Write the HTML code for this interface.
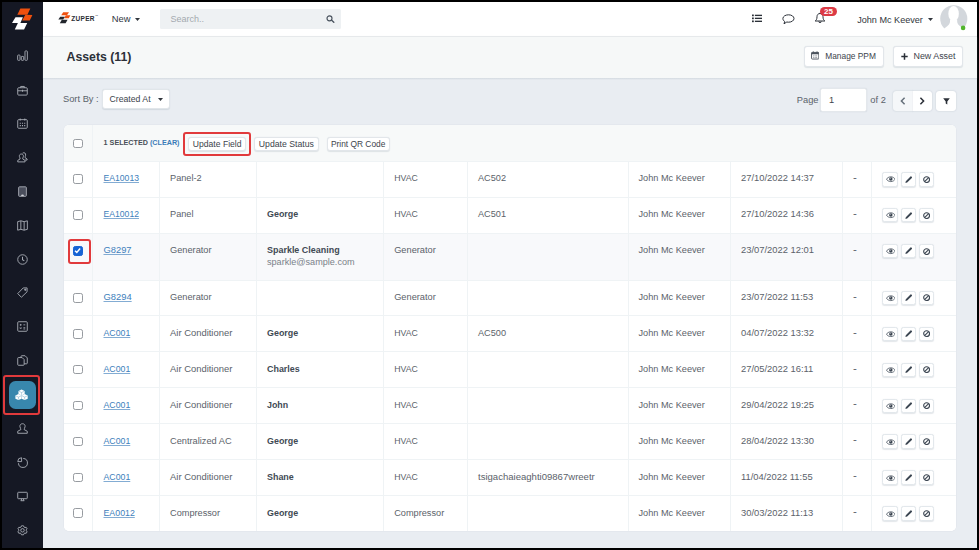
<!DOCTYPE html>
<html>
<head>
<meta charset="utf-8">
<title>Assets</title>
<style>
*{box-sizing:border-box;margin:0;padding:0}
html,body{width:979px;height:550px;overflow:hidden;background:#000}
body{font-family:"Liberation Sans",sans-serif;position:relative;color:#555c64;font-size:9px}
.abs{position:absolute}
#side{position:absolute;left:2px;top:2px;width:40.600px;height:546px;background:#151824}
#nav{position:absolute;left:42.600px;top:2px;width:934.400px;height:34px;background:#fff}
#hdr{position:absolute;left:42.600px;top:36px;width:934.400px;height:41.600px;background:#f6f8f8;border-top:1px solid #e6e9eb;box-shadow:0 1px 1.500px rgba(120,135,150,.38)}
#main{position:absolute;left:42.600px;top:77.600px;width:934.400px;height:470.400px;background:#e9edf2}
.si{position:absolute;left:0;width:40.600px;display:block}
.si svg{display:block;margin:0 auto}
.btn{position:absolute;background:#fff;border:1px solid #e2e6ea;border-radius:3px;white-space:nowrap;color:#3d444c;box-shadow:0 .5px 1px rgba(90,110,130,.16)}
#tbl{position:absolute;left:63.500px;top:125.400px;width:892.500px;height:405.500px;background:#fff;border-radius:5px;overflow:hidden;box-shadow:0 0 0 .5px #dfe4e9}
#thead{position:absolute;left:0;top:0;width:100%;height:36.500px;background:#f7f9f9;border-bottom:1px solid #eff3f5}
.row{position:absolute;left:0;width:100%;border-bottom:1px solid #eff3f5;background:#fff}
.row.sel{background:#f8f9fb}
.vd{position:absolute;top:0;width:1px;height:100%;background:#eff3f5}
.t{position:absolute;top:10.600px;line-height:12px;font-size:9px;white-space:nowrap;color:#5b626a}
.t.lnk{color:#4080bb;text-decoration:underline;text-decoration-thickness:.7px;text-underline-offset:1.200px;text-decoration-color:rgba(64,128,187,.65);font-size:8.700px}
.t.b{font-weight:700;color:#414a54;font-size:8.900px}
.t.em{color:#7a8189;font-size:9.100px}
.t.dt{font-size:9.400px}
.cb{position:absolute;left:9.700px;width:9.600px;height:9.600px;border:1.100px solid #979ba0;border-radius:2.300px;background:#fff}
.cb.on{background:#1663d4;border-color:#1663d4}
.cb.on svg{position:absolute;left:-1px;top:-1px}
.ab{position:absolute;top:10.300px;height:14.400px;display:flex;align-items:center;justify-content:center;border:1px solid #e3e8ec;border-radius:2.500px;background:#fff;box-shadow:0 .5px 1px rgba(120,135,150,.2)}
.ic{position:absolute;display:block}
.red{position:absolute;border:2px solid #e13a3c;border-radius:3px}
</style>
</head>
<body>

<!-- SIDEBAR -->
<div id="side">
  <!-- logo -->
  <svg class="abs" style="left:0;top:0" width="40" height="36" viewBox="0 0 40 36">
    <path d="M18.400 6.600H28.300L25.400 12.800H15.300Z" fill="#ee500e"/>
    <path d="M23.300 12.800L30.400 12.900L27.700 18.400H20.200Z" fill="#ee500e"/>
    <path d="M13.500 15.300H20.900L18.400 20.900H10Z" fill="#fff"/>
    <path d="M15.900 20.900H25.200L22.100 27.400H12.800Z" fill="#fff"/>
  </svg>
  <!-- bar chart -->
  <svg class="abs" style="left:14.800px;top:48.0px" width="11" height="11" viewBox="0 0 12 12" fill="none" stroke="#a9adb6" stroke-width="1">
    <rect x="0.700" y="5.500" width="2.600" height="5.800" rx=".8"/><rect x="4.700" y="7" width="2.600" height="4.300" rx=".8"/><rect x="8.700" y="1" width="2.600" height="10.300" rx=".8"/>
  </svg>
  <!-- briefcase -->
  <svg class="abs" style="left:14.800px;top:82.6px" width="11" height="11" viewBox="0 0 12 12" fill="none" stroke="#a9adb6" stroke-width="1">
    <rect x="0.800" y="3" width="10.400" height="8" rx="1"/><path d="M4 3V1.600h4V3M0.800 6.300h10.400M6 5.200v2.200"/>
  </svg>
  <!-- calendar -->
  <svg class="abs" style="left:14.800px;top:116.1px" width="11" height="11" viewBox="0 0 12 12" fill="none" stroke="#a9adb6" stroke-width="1">
    <rect x="0.800" y="1.800" width="10.400" height="9.400" rx="1"/><path d="M3.500 0.600v2.200M8.500 0.600v2.200"/>
    <path d="M3 5.700h1.200M5.400 5.700h1.200M7.800 5.700h1.200M3 8.300h1.200M5.400 8.300h1.200M7.800 8.300h1.200" stroke-width="1.200"/>
  </svg>
  <!-- users -->
  <svg class="abs" style="left:14.800px;top:150.0px" width="11" height="11" viewBox="0 0 12 12" fill="none" stroke="#a9adb6" stroke-width="1">
    <path d="M6.200 1.200c1.800-1.200 3.600 0.200 3.200 2.400c-0.200 1.200-0.800 1.800-0.600 2.600l2.200 1.400v1.200h-2.200"/>
    <path d="M4.800 2.200c1.600 0 2.400 1.200 2.200 2.600c-0.200 1.400-1 1.800-0.800 2.800l2.600 1.600v1.600H0.800V9.200l2.600-1.600c0.200-1-0.600-1.400-0.800-2.800C2.400 3.400 3.200 2.200 4.800 2.200z"/>
  </svg>
  <!-- receipt/tablet -->
  <svg class="abs" style="left:15.800px;top:183.600px" width="9" height="11.200" viewBox="0 0 10 12">
    <rect x="0.700" y="0.700" width="8.600" height="10.600" rx="1" fill="#4a4e5c" stroke="#a9adb6" stroke-width="1"/>
    <path d="M3.400 10.800a1.600 1.600 0 0 1 3.200 0z" fill="#d0d3d9"/>
  </svg>
  <!-- map -->
  <svg class="abs" style="left:14.800px;top:217.5px" width="11" height="11" viewBox="0 0 12 12" fill="none" stroke="#a9adb6" stroke-width="1" stroke-linejoin="round">
    <path d="M0.700 1.800L4.200 0.900L7.800 1.800L11.300 0.900V10.200L7.800 11.100L4.200 10.200L0.700 11.100ZM4.200 0.900V10.200M7.800 1.800V11.100"/>
  </svg>
  <!-- clock -->
  <svg class="abs" style="left:14.800px;top:251.7px" width="11" height="11" viewBox="0 0 12 12" fill="none" stroke="#a9adb6" stroke-width="1">
    <circle cx="6" cy="6" r="5.200"/><path d="M6 3v3.200l2 1.300" stroke-width="1.100"/>
  </svg>
  <!-- tag -->
  <svg class="abs" style="left:14.800px;top:285.2px" width="11" height="11" viewBox="0 0 12 12" fill="none" stroke="#a9adb6" stroke-width="1" stroke-linejoin="round">
    <path d="M6.800 1L11 1L11 5.200L4.800 11.200L0.800 7.200Z"/><circle cx="9" cy="3" r=".7" fill="#a9adb6"/>
  </svg>
  <!-- calculator grid -->
  <svg class="abs" style="left:14.800px;top:319.2px" width="11" height="11" viewBox="0 0 12 12" fill="none" stroke="#a9adb6" stroke-width="1">
    <rect x="0.800" y="0.800" width="10.400" height="10.400" rx="1"/>
    <path d="M3 4.200h2M4 3.200v2M7 4.200h2M3.200 7l1.600 1.600M4.800 7L3.200 8.600M7 7.300h2M7 8.700h2" stroke-width=".9"/>
  </svg>
  <!-- copy docs -->
  <svg class="abs" style="left:14.800px;top:353.2px" width="11" height="11" viewBox="0 0 12 12" fill="none" stroke="#a9adb6" stroke-width="1" stroke-linejoin="round">
    <path d="M4.400 2.600V1.600a.8.800 0 0 1 .8-.8h3.600l2.400 2.400v5.600a.8.800 0 0 1-.8.800H7.800"/>
    <path d="M1.600 2.800h4l2.200 2.200v5.400a.8.800 0 0 1-.8.800H1.600a.8.800 0 0 1-.8-.8V3.600a.8.800 0 0 1 .8-.8z"/>
  </svg>
  <!-- active asset -->
  <div class="abs" style="left:6.900px;top:378.900px;width:27.400px;height:27.700px;background:#3887ad;border-radius:6.500px"></div>
  <svg class="abs" style="left:13.200px;top:385.500px" width="14" height="14" viewBox="0 0 14 14">
    <g fill="#fff">
      <path d="M6.560 1.500l3.100 1.450v3.100L6.560 7.500L3.460 6.050v-3.100z"/>
      <path d="M3.470 6.100l3.050 1.450v3.100L3.470 12.100L0.400 10.650v-3.100z"/>
      <path d="M9.650 6.100l3.050 1.450v3.100L9.650 12.100L6.600 10.650v-3.100z"/>
    </g>
    <g fill="none" stroke="#3887ad" stroke-width=".5" opacity=".7">
      <path d="M3.900 3.300L6.560 4.500l2.660-1.200M6.560 4.500v2.400"/>
      <path d="M0.900 7.900l2.570 1.200l2.570-1.200M3.470 9.100v2.400"/>
      <path d="M7.080 7.900l2.570 1.200l2.570-1.200M9.650 9.100v2.400"/>
    </g>
  </svg>
  <div class="red" style="left:1px;top:372.800px;width:36.600px;height:39.900px"></div>
  <!-- user -->
  <svg class="abs" style="left:14.800px;top:421.2px" width="11" height="11" viewBox="0 0 12 12" fill="none" stroke="#a9adb6" stroke-width="1" stroke-linejoin="round">
    <path d="M6 0.800c2 0 3 1.400 2.800 3.200c-0.200 1.600-1.200 2.200-1 3.200l3.400 1.800v2.200H0.800V9l3.400-1.800c0.200-1-0.800-1.600-1-3.200C3 2.200 4 0.800 6 0.800z"/>
  </svg>
  <!-- pie -->
  <svg class="abs" style="left:14.800px;top:454.6px" width="11" height="11" viewBox="0 0 12 12" fill="none" stroke="#a9adb6" stroke-width="1" stroke-linejoin="round">
    <path d="M6.800 1.600a4.900 4.900 0 1 1-5.200 5.200"/><path d="M5 0.800V5H0.800A4.200 4.200 0 0 1 5 0.800z"/>
  </svg>
  <!-- monitor -->
  <svg class="abs" style="left:14.800px;top:488.7px" width="11" height="11" viewBox="0 0 12 12" fill="none" stroke="#a9adb6" stroke-width="1" stroke-linejoin="round">
    <rect x="0.800" y="1.400" width="10.400" height="7" rx=".8"/><path d="M4 10.600h4M5 8.400l-.4 2.200M7 8.400l.4 2.200"/>
  </svg>
  <!-- gear -->
  <svg class="abs" style="left:14.800px;top:523.3px" width="11" height="11" viewBox="0 0 12 12" fill="none" stroke="#a9adb6" stroke-width="1" stroke-linejoin="round">
    <path d="M5 0.800h2l.4 1.500l1 .5l1.400-.7l1.300 1.600l-.9 1.300l.2 1.100l1.300.8l-.6 1.900l-1.600.1l-.8.800l.1 1.600l-1.900.6l-.9-1.300H5l-.9 1.300l-1.900-.6l.1-1.600l-.8-.8L0 8.800L-.6 6.900" stroke="none"/>
    <path d="M6 0.700l1.100.2l.5 1.300l1 .6l1.400-.3l1 1.700l-.9 1l0 1.200l.9 1l-1 1.700l-1.400-.3l-1 .6l-.5 1.300H4.900l-.5-1.300l-1-.6l-1.400.3l-1-1.700l.9-1V5.200l-.9-1l1-1.700l1.400.3l1-.6l.5-1.300z"/>
    <circle cx="6" cy="5.800" r="1.900"/>
  </svg>
</div>

<!-- TOP NAV -->
<div id="nav"></div>
<!-- zuper logo -->
<svg class="abs" style="left:57.500px;top:12px" width="13" height="12" viewBox="0 0 13 12">
  <path d="M5.200 0.200H11L9 3.300H3.200Z" fill="#f0510f"/>
  <path d="M7.800 3.300H12.400L10.800 6.200H6.200Z" fill="#f0510f"/>
  <path d="M2.200 4.800H7L5.200 7.600H0.400Z" fill="#23262d"/>
  <path d="M3.800 7.800H9.600L7.600 11.200H1.800Z" fill="#23262d"/>
</svg>
<span class="abs" style="left:71.200px;top:14px;font-size:6.500px;line-height:9px;font-weight:700;color:#2a2d34;letter-spacing:.32px">ZUPER</span>
<span class="abs" style="left:95.200px;top:14.200px;font-size:1.900px;line-height:3px;font-weight:700;color:#6a6f77">TM</span>
<span class="abs" style="left:111.800px;top:13px;font-size:9.400px;line-height:12px;color:#31363d">New</span>
<svg class="abs" style="left:135.200px;top:17.700px" width="5" height="3" viewBox="0 0 5 3"><path d="M0 0h5L2.500 3z" fill="#31363d"/></svg>
<div class="abs" style="left:160.300px;top:8.900px;width:180.700px;height:20.100px;background:#eef1f3;border-radius:1.500px"></div>
<span class="abs" style="left:170.400px;top:13.200px;font-size:9px;line-height:12px;color:#a3a9af">Search..</span>
<svg class="abs" style="left:326px;top:15.200px" width="9" height="8" viewBox="0 0 9 8"><circle cx="3.500" cy="3.300" r="2.500" fill="none" stroke="#48525d" stroke-width="1.150"/><path d="M5.400 5.100L7.800 7.300" stroke="#48525d" stroke-width="1.350" stroke-linecap="round"/></svg>
<!-- list icon -->
<svg class="abs" style="left:751.500px;top:14px" width="10.800" height="8.800" viewBox="0 0 12 9" fill="#2b3038"><rect x="0" y="0.200" width="2" height="1.900"/><rect x="3.200" y="0.400" width="8.300" height="1.500"/><rect x="0" y="3.500" width="2" height="1.900"/><rect x="3.200" y="3.700" width="8.300" height="1.500"/><rect x="0" y="6.800" width="2" height="1.900"/><rect x="3.200" y="7" width="8.300" height="1.500"/></svg>
<!-- comment icon -->
<svg class="abs" style="left:782px;top:13.700px" width="13" height="11" viewBox="0 0 13 11" fill="none" stroke="#2b3038" stroke-width="1"><path d="M6.500 0.800c3.100 0 5.500 1.600 5.500 3.700s-2.400 3.700-5.500 3.700c-.6 0-1.200-.1-1.700-.2L2 9.800l.7-2.300C1.500 6.800.9 5.700.9 4.500C.9 2.400 3.400.8 6.500.8z" stroke-linejoin="round"/></svg>
<!-- bell -->
<svg class="abs" style="left:814px;top:12px" width="12" height="12" viewBox="0 0 12 12" fill="none" stroke="#2b3038" stroke-width="1" stroke-linejoin="round"><path d="M6 0.800v.8M6 1.500c-2 0-3 1.500-3 3.200c0 2.500-.8 3.500-1.800 4.300h9.600C9.800 8.200 9 7.200 9 4.700c0-1.700-1-3.200-3-3.200zM4.800 9.400a1.200 1.200 0 0 0 2.400 0"/></svg>
<div class="abs" style="left:820.300px;top:6.700px;width:16.500px;height:9.800px;background:#dc3a45;border-radius:5px;color:#fff;font-size:8px;line-height:10px;font-weight:700;text-align:center">25</div>
<span class="abs" style="left:857.200px;top:13.600px;font-size:9.100px;line-height:12px;color:#31363d">John Mc Keever</span>
<svg class="abs" style="left:928px;top:17.700px" width="5" height="3" viewBox="0 0 5 3"><path d="M0 0h5L2.500 3z" fill="#31363d"/></svg>
<!-- avatar -->
<svg class="abs" style="left:939.600px;top:5.400px" width="28" height="28" viewBox="0 0 28 28">
  <circle cx="13.760" cy="13.700" r="13.550" fill="#d3d7dc"/>
  <g fill="#fff">
    <ellipse cx="13.600" cy="8.700" rx="5.250" ry="7.600"/>
    <path d="M10 14.500C10.200 18.500 9.800 19.500 4.300 23.400L-1 29H29L23.250 23.400C17.500 19.500 17 18.500 17.200 14.500Z"/>
  </g>
  <circle cx="23.100" cy="22.900" r="2.300" fill="#52b52c"/>
</svg>

<!-- HEADER BAND -->
<div id="hdr"></div>
<span class="abs" style="left:66.500px;top:50.100px;font-size:12.300px;line-height:15px;font-weight:700;color:#2b3038">Assets (11)</span>
<div class="btn" style="left:804px;top:46px;width:80px;height:20.500px"></div>
<svg class="abs" style="left:810.700px;top:51.200px" width="8.400" height="8.800" viewBox="0 0 9 9"><rect x="0.600" y="1.300" width="7.800" height="7.100" rx=".7" fill="none" stroke="#4a525c" stroke-width="1"/><rect x="0.600" y="1.300" width="7.800" height="2" fill="#4a525c"/><path d="M2.500 0.200v1.600M6.500 0.200v1.600" stroke="#4a525c" stroke-width="1"/><path d="M2.400 5h4.200M2.400 6.700h4.200" stroke="#4a525c" stroke-width=".7" stroke-dasharray="1 .6"/></svg>
<span class="abs" style="left:825.200px;top:50.300px;font-size:8.400px;line-height:12px;color:#3d444c">Manage PPM</span>
<div class="btn" style="left:893px;top:46px;width:70px;height:20.500px"></div>
<svg class="abs" style="left:900.500px;top:52.500px" width="7" height="7" viewBox="0 0 7 7"><path d="M3.500 0.300v6.400M0.300 3.500h6.400" stroke="#2b3038" stroke-width="1.500"/></svg>
<span class="abs" style="left:913.500px;top:50.300px;font-size:8.900px;line-height:12px;color:#3d444c">New Asset</span>

<!-- MAIN -->
<div id="main"></div>
<div class="abs" style="left:42.600px;top:77.600px;width:934.400px;height:2.400px;background:linear-gradient(rgba(125,140,150,.2),rgba(125,140,150,0))"></div>
<span class="abs" style="left:63px;top:92.600px;font-size:9.300px;line-height:12px;color:#5b626a">Sort By :</span>
<div class="btn" style="left:102.400px;top:89px;width:67.800px;height:19.600px;border-color:#e1e6ea"></div>
<span class="abs" style="left:109.500px;top:93px;font-size:8.700px;line-height:12px;color:#3d444c">Created At</span>
<svg class="abs" style="left:158.300px;top:97.500px" width="5" height="3" viewBox="0 0 5 3"><path d="M0 0h5L2.500 3z" fill="#31363d"/></svg>

<span class="abs" style="left:796.800px;top:94.100px;font-size:9.300px;line-height:12px;color:#5b626a">Page</span>
<div class="abs" style="left:820px;top:88px;width:47px;height:23.500px;background:#fff;border:1px solid #e4e8ec;border-radius:2.500px;box-shadow:0 0 1px rgba(90,110,130,.25)"></div>
<span class="abs" style="left:829px;top:94.100px;font-size:9.300px;line-height:12px;color:#3d444c">1</span>
<span class="abs" style="left:870.300px;top:94.100px;font-size:9.300px;line-height:12px;color:#5b626a">of 2</span>
<div class="abs" style="left:893px;top:91px;width:20px;height:20px;background:#f5f7f9;border-radius:3px 0 0 3px;box-shadow:0 0 1.500px rgba(90,110,130,.35)"></div>
<div class="abs" style="left:912.400px;top:91px;width:20px;height:20px;background:#fff;border-radius:0 3px 3px 0;box-shadow:0 0 1.500px rgba(90,110,130,.35);clip-path:inset(-2px -2px -2px 0)"></div>
<svg class="abs" style="left:899.600px;top:96.800px" width="6" height="8" viewBox="0 0 6 8" fill="none" stroke="#66707b" stroke-width="1.500"><path d="M4.600 0.800L1.400 4L4.600 7.200"/></svg>
<svg class="abs" style="left:919.400px;top:96.800px" width="6" height="8" viewBox="0 0 6 8" fill="none" stroke="#2b3038" stroke-width="1.500"><path d="M1.400 0.800L4.600 4L1.400 7.200"/></svg>
<div class="abs" style="left:936px;top:91px;width:20px;height:20px;background:#fff;border-radius:3px;box-shadow:0 0 1.500px rgba(90,110,130,.35)"></div>
<svg class="abs" style="left:942.600px;top:97.600px" width="7" height="7" viewBox="0 0 7 7"><path d="M0.200 0.300h6.600L4.300 3.400v3.200L2.700 5.600V3.400z" fill="#2b3038"/></svg>

<!-- TABLE -->
<div id="tbl">
  <div id="thead">
    <div class="cb" style="top:13.200px"></div>
    <span class="abs" style="left:40.100px;top:12.700px;font-size:7.200px;line-height:10px;font-weight:700;color:#4a5058;white-space:nowrap">1 SELECTED <span style="color:#3b7cb8">(CLEAR)</span></span>
    <div class="btn" style="left:124.700px;top:11.200px;width:57.500px;height:14.300px"></div>
    <span class="abs" style="left:129.300px;top:12.600px;font-size:8.600px;line-height:12px;color:#3d444c;white-space:nowrap">Update Field</span>
    <div class="btn" style="left:190.800px;top:11.200px;width:64.300px;height:14.300px"></div>
    <span class="abs" style="left:195.300px;top:12.600px;font-size:8.700px;line-height:12px;color:#3d444c;white-space:nowrap">Update Status</span>
    <div class="btn" style="left:263.700px;top:11.200px;width:62.500px;height:14.300px"></div>
    <span class="abs" style="left:267.400px;top:12.600px;font-size:8.400px;line-height:12px;color:#3d444c;white-space:nowrap">Print QR Code</span>
  </div>
<div class="row" style="top:36.5px;height:35.9px">
<div class="cb" style="top:12.500px"></div>
<span class="t lnk" style="left:40.0px;font-size:8.63px">EA10013</span>
<span class="t" style="left:106.5px;font-size:9.20px">Panel-2</span>
<span class="t" style="left:330.7px;font-size:8.73px">HVAC</span>
<span class="t" style="left:414.5px;font-size:9.16px">AC502</span>
<span class="t" style="left:575.0px;font-size:9.19px">John Mc Keever</span>
<span class="t dt" style="left:677.5px">27/10/2022 14:37</span>
<span class="t" style="left:789.5px;font-size:11.5px;top:9.200px">-</span>
<div class="ab" style="left:818.8px;width:15.900px"><svg width="9.600" height="6.400" viewBox="0 0 18 12" style="margin-left:.6px;margin-top:.6px"><path d="M9 1.500C5.200 1.500 2.200 3.700 0.800 6c1.400 2.300 4.400 4.500 8.200 4.500s6.800-2.200 8.200-4.500C15.800 3.700 12.800 1.500 9 1.500z" fill="#fff" stroke="#59636e" stroke-width="1.700"/><circle cx="9" cy="5.600" r="3.300" fill="#3b4551"/><circle cx="7.800" cy="4.400" r="1" fill="#c9cdd2"/></svg></div>
<div class="ab" style="left:837.7px;width:14.500px"><svg width="7.400" height="7.400" viewBox="0 0 14 14"><path d="M0.800 13.200l0.700-3.300L10.400 1a1.200 1.200 0 0 1 1.700 0l0.900 0.900a1.200 1.200 0 0 1 0 1.700L4.100 12.500z" fill="#3b4551"/></svg></div>
<div class="ab" style="left:855.4px;width:14.700px"><svg width="7.200" height="7.200" viewBox="0 0 14 14"><circle cx="7" cy="7" r="5.700" fill="none" stroke="#3b4551" stroke-width="2.100"/><path d="M11 3L3 11" stroke="#3b4551" stroke-width="2.100"/></svg></div>
</div>
<div class="row" style="top:72.4px;height:35.9px">
<div class="cb" style="top:12.500px"></div>
<span class="t lnk" style="left:40.0px;font-size:8.63px">EA10012</span>
<span class="t" style="left:106.5px;font-size:9.20px">Panel</span>
<span class="t b" style="left:203.5px;font-size:8.91px">George</span>
<span class="t" style="left:330.7px;font-size:8.73px">HVAC</span>
<span class="t" style="left:414.5px;font-size:9.16px">AC501</span>
<span class="t" style="left:575.0px;font-size:9.19px">John Mc Keever</span>
<span class="t dt" style="left:677.5px">27/10/2022 14:36</span>
<span class="t" style="left:789.5px;font-size:11.5px;top:9.200px">-</span>
<div class="ab" style="left:818.8px;width:15.900px"><svg width="9.600" height="6.400" viewBox="0 0 18 12" style="margin-left:.6px;margin-top:.6px"><path d="M9 1.500C5.200 1.500 2.200 3.700 0.800 6c1.400 2.300 4.400 4.500 8.200 4.500s6.800-2.200 8.200-4.500C15.800 3.700 12.800 1.500 9 1.500z" fill="#fff" stroke="#59636e" stroke-width="1.700"/><circle cx="9" cy="5.600" r="3.300" fill="#3b4551"/><circle cx="7.800" cy="4.400" r="1" fill="#c9cdd2"/></svg></div>
<div class="ab" style="left:837.7px;width:14.500px"><svg width="7.400" height="7.400" viewBox="0 0 14 14"><path d="M0.800 13.200l0.700-3.300L10.400 1a1.200 1.200 0 0 1 1.700 0l0.900 0.900a1.200 1.200 0 0 1 0 1.700L4.100 12.500z" fill="#3b4551"/></svg></div>
<div class="ab" style="left:855.4px;width:14.700px"><svg width="7.200" height="7.200" viewBox="0 0 14 14"><circle cx="7" cy="7" r="5.700" fill="none" stroke="#3b4551" stroke-width="2.100"/><path d="M11 3L3 11" stroke="#3b4551" stroke-width="2.100"/></svg></div>
</div>
<div class="row sel" style="top:108.3px;height:46.9px">
<div class="cb on" style="top:12.500px"><svg width="9" height="9" viewBox="0 0 9 9"><path d="M2 4.700L3.800 6.400L7.100 2.600" fill="none" stroke="#fff" stroke-width="1.500"/></svg></div>
<span class="t lnk" style="left:40.0px;font-size:9.33px">G8297</span>
<span class="t" style="left:106.5px;font-size:9.24px">Generator</span>
<span class="t b" style="left:203.5px;font-size:8.96px">Sparkle Cleaning</span>
<span class="t em" style="left:203.5px;top:22.500px">sparkle@sample.com</span>
<span class="t" style="left:330.7px;font-size:9.24px">Generator</span>
<span class="t" style="left:575.0px;font-size:9.19px">John Mc Keever</span>
<span class="t dt" style="left:677.5px">23/07/2022 12:01</span>
<span class="t" style="left:789.5px;font-size:11.5px;top:9.200px">-</span>
<div class="ab" style="left:818.8px;width:15.900px"><svg width="9.600" height="6.400" viewBox="0 0 18 12" style="margin-left:.6px;margin-top:.6px"><path d="M9 1.500C5.200 1.500 2.200 3.700 0.800 6c1.400 2.300 4.400 4.500 8.200 4.500s6.800-2.200 8.200-4.500C15.800 3.700 12.800 1.500 9 1.500z" fill="#fff" stroke="#59636e" stroke-width="1.700"/><circle cx="9" cy="5.600" r="3.300" fill="#3b4551"/><circle cx="7.800" cy="4.400" r="1" fill="#c9cdd2"/></svg></div>
<div class="ab" style="left:837.7px;width:14.500px"><svg width="7.400" height="7.400" viewBox="0 0 14 14"><path d="M0.800 13.200l0.700-3.300L10.400 1a1.200 1.200 0 0 1 1.700 0l0.900 0.900a1.200 1.200 0 0 1 0 1.700L4.100 12.500z" fill="#3b4551"/></svg></div>
<div class="ab" style="left:855.4px;width:14.700px"><svg width="7.200" height="7.200" viewBox="0 0 14 14"><circle cx="7" cy="7" r="5.700" fill="none" stroke="#3b4551" stroke-width="2.100"/><path d="M11 3L3 11" stroke="#3b4551" stroke-width="2.100"/></svg></div>
</div>
<div class="row" style="top:155.2px;height:35.9px">
<div class="cb" style="top:12.500px"></div>
<span class="t lnk" style="left:40.0px;font-size:9.39px">G8294</span>
<span class="t" style="left:106.5px;font-size:9.24px">Generator</span>
<span class="t" style="left:330.7px;font-size:9.24px">Generator</span>
<span class="t" style="left:575.0px;font-size:9.19px">John Mc Keever</span>
<span class="t dt" style="left:677.5px">23/07/2022 11:53</span>
<span class="t" style="left:789.5px;font-size:11.5px;top:9.200px">-</span>
<div class="ab" style="left:818.8px;width:15.900px"><svg width="9.600" height="6.400" viewBox="0 0 18 12" style="margin-left:.6px;margin-top:.6px"><path d="M9 1.500C5.200 1.500 2.200 3.700 0.800 6c1.400 2.300 4.400 4.500 8.200 4.500s6.800-2.200 8.200-4.500C15.800 3.700 12.800 1.500 9 1.500z" fill="#fff" stroke="#59636e" stroke-width="1.700"/><circle cx="9" cy="5.600" r="3.300" fill="#3b4551"/><circle cx="7.800" cy="4.400" r="1" fill="#c9cdd2"/></svg></div>
<div class="ab" style="left:837.7px;width:14.500px"><svg width="7.400" height="7.400" viewBox="0 0 14 14"><path d="M0.800 13.200l0.700-3.300L10.400 1a1.200 1.200 0 0 1 1.700 0l0.900 0.900a1.200 1.200 0 0 1 0 1.700L4.100 12.500z" fill="#3b4551"/></svg></div>
<div class="ab" style="left:855.4px;width:14.700px"><svg width="7.200" height="7.200" viewBox="0 0 14 14"><circle cx="7" cy="7" r="5.700" fill="none" stroke="#3b4551" stroke-width="2.100"/><path d="M11 3L3 11" stroke="#3b4551" stroke-width="2.100"/></svg></div>
</div>
<div class="row" style="top:191.1px;height:35.9px">
<div class="cb" style="top:12.500px"></div>
<span class="t lnk" style="left:40.0px;font-size:8.76px">AC001</span>
<span class="t" style="left:106.5px;font-size:9.43px">Air Conditioner</span>
<span class="t b" style="left:203.5px;font-size:8.91px">George</span>
<span class="t" style="left:330.7px;font-size:8.73px">HVAC</span>
<span class="t" style="left:414.5px;font-size:9.16px">AC500</span>
<span class="t" style="left:575.0px;font-size:9.19px">John Mc Keever</span>
<span class="t dt" style="left:677.5px">04/07/2022 13:32</span>
<span class="t" style="left:789.5px;font-size:11.5px;top:9.200px">-</span>
<div class="ab" style="left:818.8px;width:15.900px"><svg width="9.600" height="6.400" viewBox="0 0 18 12" style="margin-left:.6px;margin-top:.6px"><path d="M9 1.500C5.200 1.500 2.200 3.700 0.800 6c1.400 2.300 4.400 4.500 8.200 4.500s6.800-2.200 8.200-4.500C15.800 3.700 12.800 1.500 9 1.500z" fill="#fff" stroke="#59636e" stroke-width="1.700"/><circle cx="9" cy="5.600" r="3.300" fill="#3b4551"/><circle cx="7.800" cy="4.400" r="1" fill="#c9cdd2"/></svg></div>
<div class="ab" style="left:837.7px;width:14.500px"><svg width="7.400" height="7.400" viewBox="0 0 14 14"><path d="M0.800 13.200l0.700-3.300L10.400 1a1.200 1.200 0 0 1 1.700 0l0.900 0.900a1.200 1.200 0 0 1 0 1.700L4.100 12.500z" fill="#3b4551"/></svg></div>
<div class="ab" style="left:855.4px;width:14.700px"><svg width="7.200" height="7.200" viewBox="0 0 14 14"><circle cx="7" cy="7" r="5.700" fill="none" stroke="#3b4551" stroke-width="2.100"/><path d="M11 3L3 11" stroke="#3b4551" stroke-width="2.100"/></svg></div>
</div>
<div class="row" style="top:227.0px;height:35.9px">
<div class="cb" style="top:12.500px"></div>
<span class="t lnk" style="left:40.0px;font-size:8.76px">AC001</span>
<span class="t" style="left:106.5px;font-size:9.43px">Air Conditioner</span>
<span class="t b" style="left:203.5px;font-size:8.94px">Charles</span>
<span class="t" style="left:330.7px;font-size:8.73px">HVAC</span>
<span class="t" style="left:575.0px;font-size:9.19px">John Mc Keever</span>
<span class="t dt" style="left:677.5px">27/05/2022 16:11</span>
<span class="t" style="left:789.5px;font-size:11.5px;top:9.200px">-</span>
<div class="ab" style="left:818.8px;width:15.900px"><svg width="9.600" height="6.400" viewBox="0 0 18 12" style="margin-left:.6px;margin-top:.6px"><path d="M9 1.500C5.200 1.500 2.200 3.700 0.800 6c1.400 2.300 4.400 4.500 8.200 4.500s6.800-2.200 8.200-4.500C15.800 3.700 12.800 1.500 9 1.500z" fill="#fff" stroke="#59636e" stroke-width="1.700"/><circle cx="9" cy="5.600" r="3.300" fill="#3b4551"/><circle cx="7.800" cy="4.400" r="1" fill="#c9cdd2"/></svg></div>
<div class="ab" style="left:837.7px;width:14.500px"><svg width="7.400" height="7.400" viewBox="0 0 14 14"><path d="M0.800 13.200l0.700-3.300L10.400 1a1.200 1.200 0 0 1 1.700 0l0.900 0.900a1.200 1.200 0 0 1 0 1.700L4.100 12.500z" fill="#3b4551"/></svg></div>
<div class="ab" style="left:855.4px;width:14.700px"><svg width="7.200" height="7.200" viewBox="0 0 14 14"><circle cx="7" cy="7" r="5.700" fill="none" stroke="#3b4551" stroke-width="2.100"/><path d="M11 3L3 11" stroke="#3b4551" stroke-width="2.100"/></svg></div>
</div>
<div class="row" style="top:262.9px;height:35.9px">
<div class="cb" style="top:12.500px"></div>
<span class="t lnk" style="left:40.0px;font-size:8.76px">AC001</span>
<span class="t" style="left:106.5px;font-size:9.43px">Air Conditioner</span>
<span class="t b" style="left:203.5px;font-size:8.88px">John</span>
<span class="t" style="left:330.7px;font-size:8.73px">HVAC</span>
<span class="t" style="left:575.0px;font-size:9.19px">John Mc Keever</span>
<span class="t dt" style="left:677.5px">29/04/2022 19:25</span>
<span class="t" style="left:789.5px;font-size:11.5px;top:9.200px">-</span>
<div class="ab" style="left:818.8px;width:15.900px"><svg width="9.600" height="6.400" viewBox="0 0 18 12" style="margin-left:.6px;margin-top:.6px"><path d="M9 1.500C5.200 1.500 2.200 3.700 0.800 6c1.400 2.300 4.400 4.500 8.200 4.500s6.800-2.200 8.200-4.500C15.800 3.700 12.800 1.500 9 1.500z" fill="#fff" stroke="#59636e" stroke-width="1.700"/><circle cx="9" cy="5.600" r="3.300" fill="#3b4551"/><circle cx="7.800" cy="4.400" r="1" fill="#c9cdd2"/></svg></div>
<div class="ab" style="left:837.7px;width:14.500px"><svg width="7.400" height="7.400" viewBox="0 0 14 14"><path d="M0.800 13.200l0.700-3.300L10.400 1a1.200 1.200 0 0 1 1.700 0l0.900 0.900a1.200 1.200 0 0 1 0 1.700L4.100 12.500z" fill="#3b4551"/></svg></div>
<div class="ab" style="left:855.4px;width:14.700px"><svg width="7.200" height="7.200" viewBox="0 0 14 14"><circle cx="7" cy="7" r="5.700" fill="none" stroke="#3b4551" stroke-width="2.100"/><path d="M11 3L3 11" stroke="#3b4551" stroke-width="2.100"/></svg></div>
</div>
<div class="row" style="top:298.8px;height:35.9px">
<div class="cb" style="top:12.500px"></div>
<span class="t lnk" style="left:40.0px;font-size:8.76px">AC001</span>
<span class="t" style="left:106.5px;font-size:9.24px">Centralized AC</span>
<span class="t b" style="left:203.5px;font-size:8.91px">George</span>
<span class="t" style="left:330.7px;font-size:8.73px">HVAC</span>
<span class="t" style="left:575.0px;font-size:9.19px">John Mc Keever</span>
<span class="t dt" style="left:677.5px">28/04/2022 13:30</span>
<span class="t" style="left:789.5px;font-size:11.5px;top:9.200px">-</span>
<div class="ab" style="left:818.8px;width:15.900px"><svg width="9.600" height="6.400" viewBox="0 0 18 12" style="margin-left:.6px;margin-top:.6px"><path d="M9 1.500C5.200 1.500 2.200 3.700 0.800 6c1.400 2.300 4.400 4.500 8.200 4.500s6.800-2.200 8.200-4.500C15.800 3.700 12.800 1.500 9 1.500z" fill="#fff" stroke="#59636e" stroke-width="1.700"/><circle cx="9" cy="5.600" r="3.300" fill="#3b4551"/><circle cx="7.800" cy="4.400" r="1" fill="#c9cdd2"/></svg></div>
<div class="ab" style="left:837.7px;width:14.500px"><svg width="7.400" height="7.400" viewBox="0 0 14 14"><path d="M0.800 13.200l0.700-3.300L10.400 1a1.200 1.200 0 0 1 1.700 0l0.900 0.900a1.200 1.200 0 0 1 0 1.700L4.100 12.500z" fill="#3b4551"/></svg></div>
<div class="ab" style="left:855.4px;width:14.700px"><svg width="7.200" height="7.200" viewBox="0 0 14 14"><circle cx="7" cy="7" r="5.700" fill="none" stroke="#3b4551" stroke-width="2.100"/><path d="M11 3L3 11" stroke="#3b4551" stroke-width="2.100"/></svg></div>
</div>
<div class="row" style="top:334.7px;height:35.9px">
<div class="cb" style="top:12.500px"></div>
<span class="t lnk" style="left:40.0px;font-size:8.76px">AC001</span>
<span class="t" style="left:106.5px;font-size:9.43px">Air Conditioner</span>
<span class="t b" style="left:203.5px;font-size:8.93px">Shane</span>
<span class="t" style="left:330.7px;font-size:8.73px">HVAC</span>
<span class="t" style="left:414.5px;font-size:9.55px">tsigachaieaghti09867wreetr</span>
<span class="t" style="left:575.0px;font-size:9.19px">John Mc Keever</span>
<span class="t dt" style="left:677.5px">11/04/2022 11:55</span>
<span class="t" style="left:789.5px;font-size:11.5px;top:9.200px">-</span>
<div class="ab" style="left:818.8px;width:15.900px"><svg width="9.600" height="6.400" viewBox="0 0 18 12" style="margin-left:.6px;margin-top:.6px"><path d="M9 1.500C5.200 1.500 2.200 3.700 0.800 6c1.400 2.300 4.400 4.500 8.200 4.500s6.800-2.200 8.200-4.500C15.800 3.700 12.800 1.500 9 1.500z" fill="#fff" stroke="#59636e" stroke-width="1.700"/><circle cx="9" cy="5.600" r="3.300" fill="#3b4551"/><circle cx="7.800" cy="4.400" r="1" fill="#c9cdd2"/></svg></div>
<div class="ab" style="left:837.7px;width:14.500px"><svg width="7.400" height="7.400" viewBox="0 0 14 14"><path d="M0.800 13.200l0.700-3.300L10.400 1a1.200 1.200 0 0 1 1.700 0l0.900 0.900a1.200 1.200 0 0 1 0 1.700L4.100 12.500z" fill="#3b4551"/></svg></div>
<div class="ab" style="left:855.4px;width:14.700px"><svg width="7.200" height="7.200" viewBox="0 0 14 14"><circle cx="7" cy="7" r="5.700" fill="none" stroke="#3b4551" stroke-width="2.100"/><path d="M11 3L3 11" stroke="#3b4551" stroke-width="2.100"/></svg></div>
</div>
<div class="row" style="top:370.6px;height:35.9px">
<div class="cb" style="top:12.500px"></div>
<span class="t lnk" style="left:40.0px;font-size:8.80px">EA0012</span>
<span class="t" style="left:106.5px;font-size:9.20px">Compressor</span>
<span class="t b" style="left:203.5px;font-size:8.91px">George</span>
<span class="t" style="left:330.7px;font-size:9.20px">Compressor</span>
<span class="t" style="left:575.0px;font-size:9.19px">John Mc Keever</span>
<span class="t dt" style="left:677.5px">30/03/2022 11:13</span>
<span class="t" style="left:789.5px;font-size:11.5px;top:9.200px">-</span>
<div class="ab" style="left:818.8px;width:15.900px"><svg width="9.600" height="6.400" viewBox="0 0 18 12" style="margin-left:.6px;margin-top:.6px"><path d="M9 1.500C5.200 1.500 2.200 3.700 0.800 6c1.400 2.300 4.400 4.500 8.200 4.500s6.800-2.200 8.200-4.500C15.800 3.700 12.800 1.500 9 1.500z" fill="#fff" stroke="#59636e" stroke-width="1.700"/><circle cx="9" cy="5.600" r="3.300" fill="#3b4551"/><circle cx="7.800" cy="4.400" r="1" fill="#c9cdd2"/></svg></div>
<div class="ab" style="left:837.7px;width:14.500px"><svg width="7.400" height="7.400" viewBox="0 0 14 14"><path d="M0.800 13.200l0.700-3.300L10.400 1a1.200 1.200 0 0 1 1.700 0l0.900 0.900a1.200 1.200 0 0 1 0 1.700L4.100 12.500z" fill="#3b4551"/></svg></div>
<div class="ab" style="left:855.4px;width:14.700px"><svg width="7.200" height="7.200" viewBox="0 0 14 14"><circle cx="7" cy="7" r="5.700" fill="none" stroke="#3b4551" stroke-width="2.100"/><path d="M11 3L3 11" stroke="#3b4551" stroke-width="2.100"/></svg></div>
</div>
  <div class="abs" style="left:0;top:36px;width:100%;height:370px;pointer-events:none">
<div class="vd" style="left:28.7px"></div>
<div class="vd" style="left:95.5px"></div>
<div class="vd" style="left:192.3px"></div>
<div class="vd" style="left:319.5px"></div>
<div class="vd" style="left:403.5px"></div>
<div class="vd" style="left:564.4px"></div>
<div class="vd" style="left:666.5px"></div>
<div class="vd" style="left:778.5px"></div>
<div class="vd" style="left:807.3px"></div>
  </div>
  <div class="vd" style="left:28.700px;height:36px"></div>
</div>
<div class="red" style="left:183.300px;top:131.900px;width:67.400px;height:24.300px"></div>
<div class="red" style="left:67.500px;top:238.800px;width:23.800px;height:25.100px"></div>

</body>
</html>
